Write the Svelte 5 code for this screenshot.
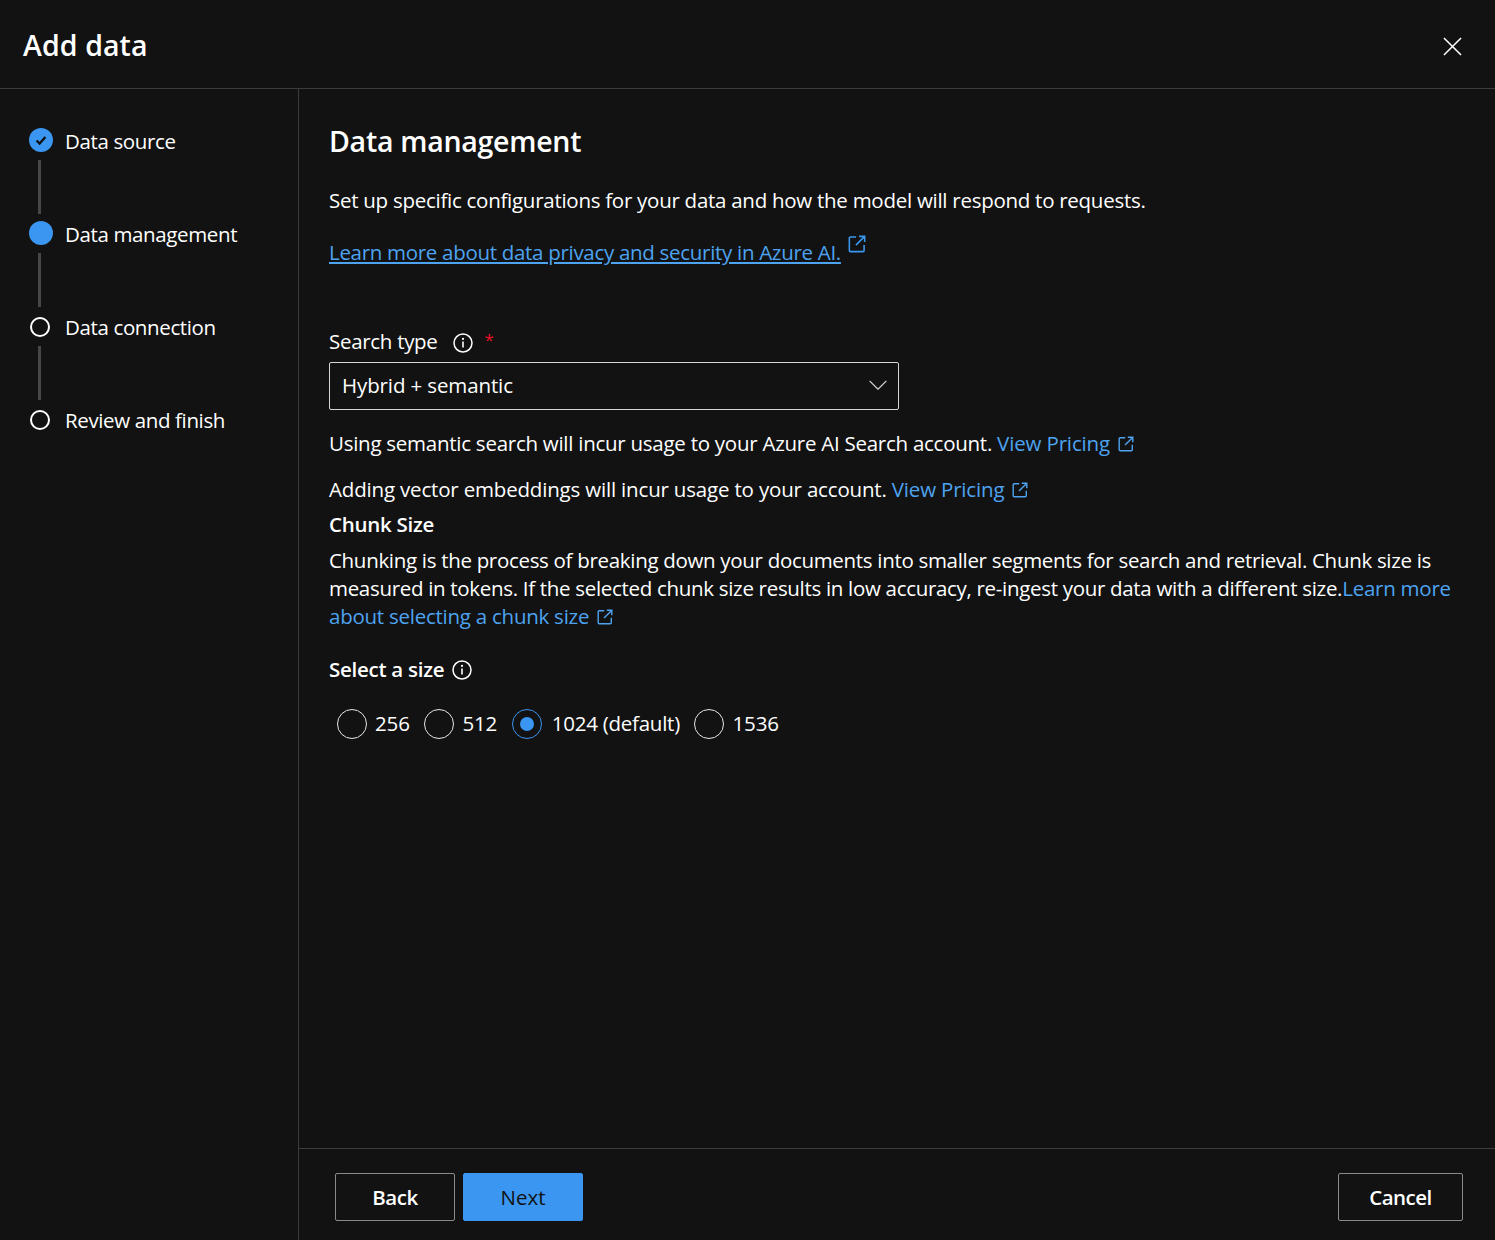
<script>
  const steps = [
    { label: 'Data source', state: 'done' },
    { label: 'Data management', state: 'current' },
    { label: 'Data connection', state: 'todo' },
    { label: 'Review and finish', state: 'todo' }
  ];
  const sizes = [
    { label: '256', checked: false },
    { label: '512', checked: false },
    { label: '1024 (default)', checked: true },
    { label: '1536', checked: false }
  ];
</script>

{#snippet ext(cls)}
  <svg class={cls} viewBox="0 0 16 16" fill="none" stroke="currentColor" stroke-width="1.4">
    <path d="M7.2 1.7H2.2a1 1 0 0 0-1 1v11.1a1 1 0 0 0 1 1h11.1a1 1 0 0 0 1-1V8.8" />
    <path d="M9.8 1.2h5v5M14.6 1.4 7 9" />
  </svg>
{/snippet}

{#snippet info()}
  <svg class="info" viewBox="0 0 20 20" fill="none" stroke="currentColor">
    <circle cx="10" cy="10" r="9" stroke-width="1.5" />
    <path d="M10 8.6v6" stroke-width="1.6" />
    <circle cx="10" cy="5.9" r="1.1" fill="currentColor" stroke="none" />
  </svg>
{/snippet}

<div class="dialog">
  <header class="head">
    <h1>Add data</h1>
    <svg class="close" viewBox="0 0 20 20" fill="none" stroke="currentColor" stroke-width="1.6">
      <path d="M1 1 19 19M19 1 1 19" />
    </svg>
  </header>
  <div class="body">
    <nav class="side">
      {#each steps as s, i}
        <div class="step">
          <span class="dot {s.state}">
            {#if s.state === 'done'}
              <svg viewBox="0 0 12 12" fill="none" stroke="#111" stroke-width="2"><path d="M2.2 6.4 4.8 9 9.8 3.4" /></svg>
            {/if}
          </span>
          <span class="step-label">{s.label}</span>
          {#if i < steps.length - 1}<span class="line"></span>{/if}
        </div>
      {/each}
    </nav>
    <div class="panel">
      <main class="content">
        <h2>Data management</h2>
        <p class="desc">Set up specific configurations for your data and how the model will respond to requests.</p>
        <p class="privacy"><a href="#a" class="under">Learn more about data privacy and security in Azure AI.</a>{@render ext('ext-up')}</p>
        <div class="label-row">
          <span>Search type</span>
          {@render info()}
          <span class="req">*</span>
        </div>
        <div class="select">
          <span>Hybrid + semantic</span>
          <svg viewBox="0 0 18 10" fill="none" stroke="currentColor" stroke-width="1.2"><path d="M.6.8 9 9.2 17.4.8" /></svg>
        </div>
        <p class="note first">Using semantic search will incur usage to your Azure AI Search account. <a href="#a">View Pricing</a>{@render ext('ext')}</p>
        <p class="note second">Adding vector embeddings will incur usage to your account. <a href="#a">View Pricing</a>{@render ext('ext')}</p>
        <h3>Chunk Size</h3>
        <p class="para">Chunking is the process of breaking down your documents into smaller segments for search and retrieval. Chunk size is measured in tokens. If the selected chunk size results in low accuracy, re-ingest your data with a different size.<a href="#a">Learn more about selecting a chunk size</a>{@render ext('ext')}</p>
        <div class="size-label">
          <strong>Select a size</strong>
          {@render info()}
        </div>
        <div class="radios">
          {#each sizes as r}
            <label class="radio">
              <span class="circle" class:on={r.checked}></span>
              <span>{r.label}</span>
            </label>
          {/each}
        </div>
      </main>
      <footer class="foot">
        <button class="btn">Back</button>
        <button class="btn primary">Next</button>
        <button class="btn cancel">Cancel</button>
      </footer>
    </div>
  </div>
</div>

<style>
  :global(body) {
    margin: 0;
    background: #121212;
  }
  .dialog {
    width: 1495px;
    height: 1240px;
    display: flex;
    flex-direction: column;
    background: #121212;
    color: #fff;
    font-family: "Open Sans", "Noto Sans", sans-serif;
    font-size: 20.5px;
    letter-spacing: -0.27px;
    overflow: hidden;
  }
  .head {
    flex: none;
    box-sizing: border-box;
    border-bottom: 1px solid #3b3b3b;
    padding: 0 33px 0 23px;
    display: flex;
    align-items: center;
    justify-content: space-between;
    height: 89px;
  }
  h1 {
    margin: 2px 0 0;
    font-size: 28.5px;
    font-weight: 600;
    letter-spacing: 0.1px;
  }
  .close {
    width: 19px;
    height: 19px;
    margin-top: 5px;
  }
  .body {
    flex: 1;
    display: flex;
    min-height: 0;
  }
  .side {
    width: 299px;
    flex: none;
    box-sizing: border-box;
    border-right: 1px solid #3b3b3b;
    padding: 39px 0 0 29px;
  }
  .step {
    height: 93px;
    display: flex;
    align-items: flex-start;
    position: relative;
  }
  .dot {
    width: 24px;
    height: 24px;
    box-sizing: border-box;
    border-radius: 50%;
    flex: none;
    display: flex;
    align-items: center;
    justify-content: center;
  }
  .dot.done, .dot.current {
    background: #3a96f0;
  }
  .dot.todo {
    width: 20px;
    height: 20px;
    margin: 3px 3px 1px 1px;
    border: 2px solid #fff;
  }
  .dot svg {
    width: 14px;
    height: 14px;
  }
  .step-label {
    margin-left: 12px;
    line-height: 26px;
    letter-spacing: -0.37px;
  }
  .line {
    position: absolute;
    left: 9px;
    top: 32px;
    width: 3px;
    height: 54px;
    background: #474747;
  }
  .panel {
    flex: 1;
    display: flex;
    flex-direction: column;
    min-width: 0;
  }
  .content {
    flex: 1;
    padding: 32px 32px 0 30px;
  }
  h2 {
    margin: 0;
    font-size: 28.5px;
    line-height: 40px;
    font-weight: 600;
    letter-spacing: -0.27px;
  }
  p {
    margin: 0;
    line-height: 28px;
  }
  a {
    color: #4da3f0;
    text-decoration: none;
  }
  a.under {
    text-decoration: underline;
  }
  .desc {
    margin-top: 25px;
  }
  .privacy {
    margin-top: 21px;
    letter-spacing: -0.3px;
  }
  .ext-up {
    width: 18px;
    height: 18px;
    color: #3a96f0;
    margin-left: 7px;
    vertical-align: 7px;
  }
  .ext {
    width: 16px;
    height: 16px;
    color: #4da3f0;
    margin-left: 8px;
    vertical-align: -1px;
  }
  .label-row {
    margin-top: 61px;
    height: 28px;
    display: flex;
    align-items: center;
    letter-spacing: -0.3px;
  }
  .label-row .info {
    margin-top: 4px;
  }
  .info {
    width: 20px;
    height: 20px;
    margin-left: 15px;
    margin-top: 2px;
    flex: none;
  }
  .req {
    color: #e81123;
    margin-left: 12px;
    margin-top: -4px;
    font-size: 17px;
  }
  .select {
    margin-top: 7px;
    width: 570px;
    height: 48px;
    box-sizing: border-box;
    border: 1px solid #d6d6d6;
    border-radius: 2px;
    padding: 0 11px 0 12px;
    display: flex;
    align-items: center;
    justify-content: space-between;
    letter-spacing: -0.12px;
  }
  .select span {
    margin-top: -2px;
  }
  .select svg {
    width: 18px;
    height: 10px;
    margin-top: -3px;
    color: #d6d6d6;
  }
  .note.first {
    margin-top: 19px;
    letter-spacing: -0.26px;
  }
  .note.first a {
    letter-spacing: -0.15px;
  }
  .note.second {
    margin-top: 18px;
    letter-spacing: -0.18px;
  }
  h3 {
    margin: 7px 0 0;
    font-size: 20.5px;
    line-height: 28px;
    font-weight: 600;
  }
  .para {
    margin-top: 8px;
    letter-spacing: -0.31px;
  }
  .para a {
    letter-spacing: -0.25px;
  }
  .size-label {
    margin-top: 25px;
    height: 28px;
    display: flex;
    align-items: center;
  }
  .size-label strong {
    font-weight: 600;
  }
  .size-label .info {
    margin-left: 8px;
    margin-top: 1px;
  }
  .radios {
    margin-top: 26px;
    padding-left: 8px;
    display: flex;
    letter-spacing: -0.1px;
  }
  .radio {
    display: flex;
    align-items: center;
    height: 30px;
    margin-right: 14.5px;
  }
  .radio span:last-child {
    margin-top: -2px;
  }
  .circle {
    width: 30px;
    height: 30px;
    box-sizing: border-box;
    border: 1px solid #e6e6e6;
    border-radius: 50%;
    margin-right: 8px;
    display: flex;
    align-items: center;
    justify-content: center;
    flex: none;
  }
  .circle.on {
    border-color: #3a96f0;
    margin-right: 10px;
  }
  .circle.on + span {
    letter-spacing: -0.25px;
  }
  .circle.on::after {
    content: "";
    width: 14px;
    height: 14px;
    border-radius: 50%;
    background: #3a96f0;
  }
  .foot {
    height: 92px;
    flex: none;
    box-sizing: border-box;
    border-top: 1px solid #3b3b3b;
    padding: 24px 32px 0 36px;
    display: flex;
    align-items: flex-start;
    gap: 8px;
  }
  .btn {
    width: 120px;
    height: 48px;
    box-sizing: border-box;
    border: 1px solid #8a8a8a;
    border-radius: 2px;
    background: transparent;
    color: #fff;
    font: 600 20.5px "Open Sans", "Noto Sans", sans-serif;
    letter-spacing: -0.5px;
    padding: 0;
  }
  .btn.primary {
    background: #3a96f0;
    border-color: #3a96f0;
    color: #121212;
    font-weight: 400;
    letter-spacing: 0;
  }
  .btn.cancel {
    width: 125px;
    margin-left: auto;
  }
</style>
